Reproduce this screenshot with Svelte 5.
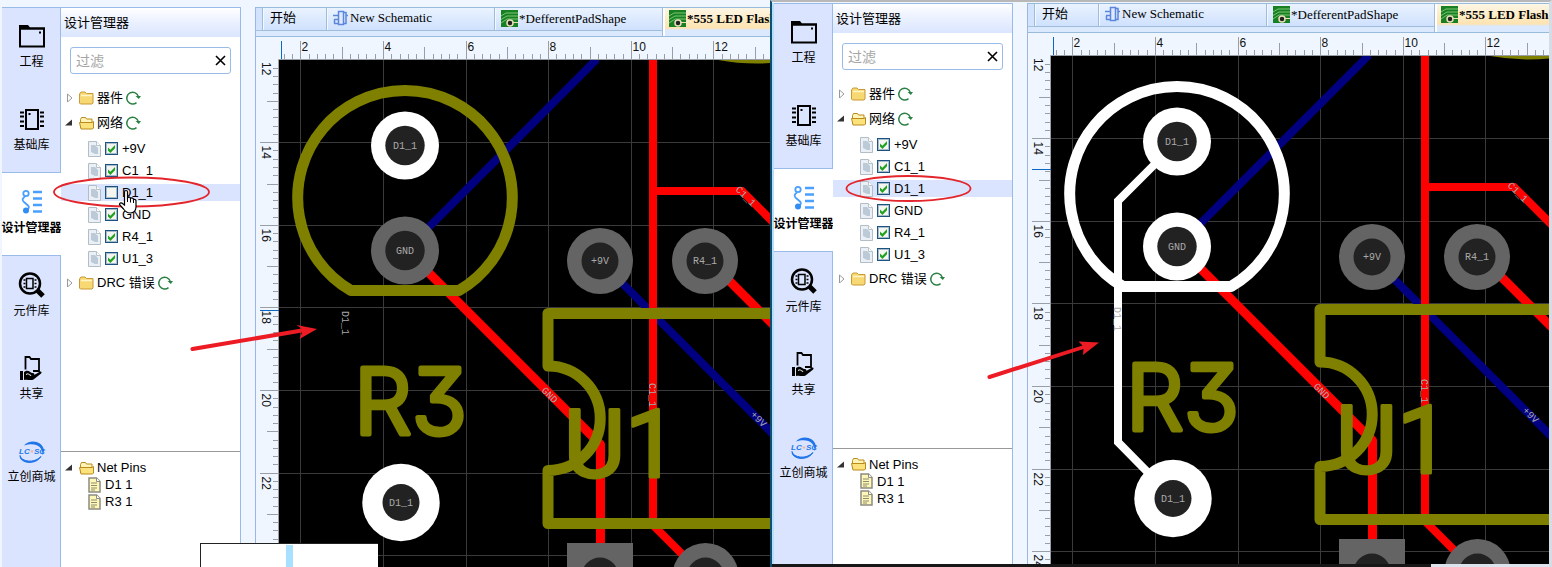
<script>
  const navItems = [
    { id: 'project', label: '工程' },
    { id: 'base', label: '基础库' },
    { id: 'manager', label: '设计管理器', active: true },
    { id: 'parts', label: '元件库' },
    { id: 'share', label: '共享' },
    { id: 'mall', label: '立创商城' }
  ];
  const tabs = [
    { kind: 'start', label: '开始' },
    { kind: 'schematic', label: 'New Schematic' },
    { kind: 'pcb', label: '*DefferentPadShape' },
    { kind: 'pcb', label: '*555 LED Flash', active: true }
  ];
  const windows = [
    { key: 'hidden', lit: false, cursorY: 310 },
    { key: 'shown', lit: true, cursorY: 173 }
  ];
  let nets = $state({
    hidden: [['+9V', true], ['C1_1', true], ['D1_1', false], ['GND', true], ['R4_1', true], ['U1_3', true]].map(([name, on]) => ({ name, on })),
    shown: ['+9V', 'C1_1', 'D1_1', 'GND', 'R4_1', 'U1_3'].map((name) => ({ name, on: true }))
  });
  let sizes = $state({ hidden: { w: 515, h: 560 }, shown: { w: 521, h: 560 } });

  // Board coordinates: the ruler corner is at (256, 37), one major step is 2 mm.
  const step = 82.6;
  const ticks = (first, from, to, start) => {
    const out = [];
    for (let i = -10; i < 400; i++) {
      const pos = first + (i * step) / 10;
      if (pos < from || pos > to) continue;
      out.push({ pos: Math.round(pos) + 0.5, size: i % 10 === 0 ? 2 : i % 5 === 0 ? 1 : 0, value: start + (i / 10) * 2 });
    }
    return out;
  };
</script>

{#snippet navIcon(id)}
  <svg class="nav-icon" width="32" height="32" viewBox="0 0 32 32" aria-hidden="true">
    {#if id === 'project'}
      <path d="M3 4h9l2 2.500h15v2H3z" fill="#000" />
      <path d="M4 7.500h24v18H4z" fill="none" stroke="#000" stroke-width="2" />
      <path d="M23 10.500h2v2h-2z" fill="#000" />
    {:else if id === 'base'}
      <path d="M10 6h12v19H10z" fill="none" stroke="#000" stroke-width="2" />
      <path d="M4 8.500h4m-4 4h4m-4 5h4m-4 4.500h4M24 8.500h4m-4 4h4m-4 5h4m-4 4.500h4" stroke="#000" stroke-width="2" />
      <path d="M12.500 9h2v2h-2z" fill="#000" />
    {:else if id === 'manager'}
      <g fill="none" stroke="#4aa0ff" stroke-width="1.800">
        <circle cx="10" cy="6.500" r="2.700" />
        <path d="M9 9.500c-3 2-3 3.500-1 5.500l4 3.500c1.500 1.500 1 3-1 4" />
        <path d="M17 5h9M17 11.500h9M17 18h9M17 24.500h9" stroke-width="2.500" />
      </g>
      <circle cx="10" cy="23.500" r="3" fill="#2f8df5" />
    {:else if id === 'parts'}
      <circle cx="14" cy="13.500" r="10" fill="none" stroke="#000" stroke-width="2.500" />
      <path d="M21 20l6 6" stroke="#000" stroke-width="5" />
      <path d="M10.500 8.500h6.500v10h-6.500z" fill="none" stroke="#000" stroke-width="1.500" />
      <path d="M7.500 10h2m-2 3.500h2m-2 3.500h2M18.500 10h2m-2 3.500h2m-2 3.500h2" stroke="#000" stroke-width="1.300" />
    {:else if id === 'share'}
      <path d="M9.500 16.500V4h4l1.500 2h8v12h-6" fill="none" stroke="#000" stroke-width="1.800" />
      <path d="M4 18h3v9H4zM8 19c4-3 6 0 8 1 3 0 3 2 1 2.500h-4c4 1 6-1 11-4 2-.5 2 1.500.5 2.500l-7 5.500c-3 1.500-6-.5-9.500.500z" fill="#000" />
      <path d="M10 21.500c2-1.500 3 0 5 1" fill="none" stroke="#fff" stroke-width="1" />
    {:else}
      <path d="M8 9.500C13 3 26 4 28 14c0 2-.5 4-1.500 5C27 11 20 5.500 8 9.500z" fill="#1f74ea" />
      <path d="M4 19.500c1 6 14 8.500 21 1-4 7-16 8-20.500 2z" fill="#1f74ea" stroke="#1f74ea" />
      <text x="3" y="18" class="logo">LC</text>
      <text x="18" y="18" class="logo">SC</text>
      <circle cx="16" cy="15.500" r="1.300" fill="#f4b59a" />
    {/if}
  </svg>
{/snippet}

{#snippet folder(open)}
  <svg class="folder" width="15" height="14" viewBox="0 0 15 14" aria-hidden="true">
    {#if open}
      <path d="M1.500 12V3.500l1-2h4l1 1.500h5.500v3" fill="#fff3b5" stroke="#b98a1e" />
      <path d="M.5 6.500h12.500l1.500-1v6.500l-1 1H2z" fill="#fbe27c" stroke="#b98a1e" />
    {:else}
      <path d="M.5 12V3l1.500-2h4l1.500 1.500h6.500V12l-1 1H1.500z" fill="#f8d873" stroke="#c99a37" />
      <path d="M2 4.500h11" stroke="#fff4c4" stroke-width="1.500" />
    {/if}
  </svg>
{/snippet}

{#snippet arrow(open)}
  <svg class="arrow" width="8" height="9" viewBox="0 0 8 9" aria-hidden="true">
    {#if open}
      <path d="M7 1.500v6H0z" fill="#333" />
    {:else}
      <path d="M2.500 1l4.500 4-4.500 4z" fill="#fff" stroke="#999" />
    {/if}
  </svg>
{/snippet}

{#snippet refresh()}
  <button class="refresh" aria-label="刷新">
    <svg width="15" height="14" viewBox="0 0 15 14" aria-hidden="true">
      <path d="M10.500 11.700A5.900 5.900 0 1 1 12.200 5" fill="none" stroke="#2b8044" stroke-width="1.500" />
      <path d="M9.500 5h5.500L12.800 8z" fill="#2b8044" />
    </svg>
  </button>
{/snippet}

{#snippet page(color)}
  <svg class="page" width="13" height="16" viewBox="0 0 13 16" aria-hidden="true">
    {#if color === 'note'}
      <path d="M1 1h7.500L12 4.500V15H1z" fill="#fdf7b8" stroke="#8d8a80" stroke-width="1.500" />
      <path d="M8.500 1v3.500H12" fill="#fff" stroke="#8d8a80" />
      <path d="M3 6h6M3 8.500h6M3 11h6M3 13h4" stroke="#8f8b6c" />
    {:else}
      <path d="M.5.500h8l4 4v11H.5z" fill="#eaf0f5" stroke="#b3bdc6" />
      <path d="M8.500.500v4h4" fill="#fff" stroke="#b9c3cb" />
      <path d="M3 4h4l3 3v6H7l-4-2z" fill="#bccad7" />
    {/if}
  </svg>
{/snippet}

{#snippet pad(x, y, outer, inner, fill, label)}
  <circle cx={x} cy={y} r={outer} {fill} />
  <circle cx={x} cy={y} r={inner} fill="#222" />
  {#if label}<text class="net" {x} y={y + 3} text-anchor="middle">{label}</text>{/if}
{/snippet}

{#snippet board(lit, cursorY, size)}
  {@const xTicks = ticks(300.4, 282, 256 + size.w, 2)}
  {@const yTicks = ticks(59.6, 62, 8 + size.h, 12)}
  {@const xMajor = xTicks.filter((t) => t.size === 2)}
  {@const yMajor = yTicks.filter((t) => t.size === 2)}
  <svg class="board" role="img" aria-label="PCB">
    <g transform="translate(-256 -37)">
      <rect x="279" y="60" width="3000" height="2000" fill="#000" />
      <g stroke="#3a3a3a">
        {#each xMajor as t}<path d="M{t.pos} 60v2000" />{/each}
        {#each yMajor as t}<path d="M279 {t.pos}h3000" />{/each}
      </g>

      <g fill="none" stroke-width="8">
        <path d="M405 251L597 59M600 261l900 900" stroke="#000080" />
        <g stroke="#f00">
          <path d="M653 60v465l60 60M653 191h89l800 800" />
          <path d="M405 249L600.500 444.500V560" stroke-width="9" stroke-linejoin="round" />
          <path d="M710 261.500l800 800" stroke-width="9" />
        </g>
        {#if lit}<path d="M405 146L346 205V446l56 57" stroke="#fff" />{/if}
      </g>

      {@render pad(405, 145.500, 34, 19.700, '#fff', '')}
      {@render pad(405, 250.500, 34, 19.700, lit ? '#fff' : '#646464', '')}
      {@render pad(600, 261, 33, 18.500, '#646464', '+9V')}
      {@render pad(705, 261, 33, 18.500, '#646464', 'R4_1')}
      {@render pad(401, 502.500, 38.700, 18.500, '#fff', 'D1_1')}
      <path d="M567 543h66v66h-66z" fill="#646464" />
      <circle cx="600" cy="576" r="18.500" fill="#222" />
      {@render pad(705.500, 576, 33, 18.500, '#646464', '')}

      <path d="M351 290.500h108A107.300 107.300 0 1 0 351 290.500z" fill="none" stroke={lit ? '#fff' : '#808000'} stroke-width="11" stroke-linejoin="round" />
      <g fill="none" stroke="#808000" stroke-width="11" stroke-linejoin="round">
        <path d="M3000 313.500H548V366A52 52 0 0 1 548 470.500V523.500H3000" />
        <svg x="279" y="60" width="1500" height="10"><circle cx="478" cy="-212.500" r="210.500" /></svg>
      </g>
      <text class="silk" x="354" y="434">R3</text>
      <text class="silk narrow" x="564" y="477">U1</text>

      <text class="net" x="405" y="149" text-anchor="middle">D1_1</text>
      <text class="net" x="405" y="254" text-anchor="middle">GND</text>
      <text class="net" transform="translate(342 311) rotate(90)">D1_1</text>
      <text class="net" transform="translate(649 383) rotate(90)">C1_1</text>
      <text class="net" transform="translate(541 391) rotate(45)">GND</text>
      <text class="net" transform="translate(735 190) rotate(45)">C1_1</text>
      <text class="net" transform="translate(750 415) rotate(45)">+9V</text>

      <path d="M256 37h3000v23H256z" fill="#eff6ff" />
      <path d="M256 37h23v2000h-23z" fill="#eff6ff" />
      <g stroke="#999fa5">
        {#each xTicks as t}<path d="M{t.pos} 59v{[-5, -12, -18][t.size]}" />{/each}
        {#each yTicks as t}<path d="M279 {t.pos}h{[-6, -12, -19][t.size]}" />{/each}
        <path d="M278.500 2000V59.500H3000" fill="none" />
      </g>
      {#each xMajor as t}<text class="tick" x={t.pos + 1} y="51">{t.value}</text>{/each}
      <text class="tick" transform="translate(262 62) rotate(90)">12</text>
      {#each yMajor as t}<text class="tick" transform="translate(262 {t.pos + 3}) rotate(90)">{t.value}</text>{/each}
      <path d="M281.500 41v18M260 {cursorY + 0.5}h19" stroke="#0a68c4" />
    </g>
  </svg>
{/snippet}

<main class="compare">
  {#each windows as w}
    <section class="window {w.key}">
      <nav class="nav">
        {#each navItems as item}
          <button class="nav-item" class:active={item.active}>
            {@render navIcon(item.id)}
            <span class="nav-label">{item.label}</span>
          </button>
        {/each}
      </nav>

      <aside class="panel">
        <h2 class="panel-title">设计管理器</h2>
        <div class="tree-area">
          <div class="filter">
            <input type="text" placeholder="过滤" aria-label="过滤" />
            <button aria-label="清除">
              <svg width="11" height="11" viewBox="0 0 11 11" aria-hidden="true"><path d="M1 1l9 9M10 1l-9 9" stroke="#000" stroke-width="1.600" /></svg>
            </button>
          </div>
          <div class="group">{@render arrow(false)}{@render folder(false)}<span>器件</span>{@render refresh()}</div>
          <div class="group">{@render arrow(true)}{@render folder(true)}<span>网络</span>{@render refresh()}</div>
          <ul class="nets">
            {#each nets[w.key] as net}
              <li class:selected={net.name === 'D1_1'}>
                <label>{@render page('net')}<input type="checkbox" bind:checked={net.on} /><span>{net.name}</span></label>
              </li>
            {/each}
          </ul>
          <div class="group">{@render arrow(false)}{@render folder(false)}<span>DRC 错误</span>{@render refresh()}</div>
        </div>
        <div class="pins">
          <div class="pin-row root">{@render arrow(true)}{@render folder(true)}<span>Net Pins</span></div>
          <div class="pin-row">{@render page('note')}<span>D1 1</span></div>
          <div class="pin-row">{@render page('note')}<span>R3 1</span></div>
        </div>
      </aside>

      <div class="editor" bind:clientWidth={sizes[w.key].w} bind:clientHeight={sizes[w.key].h}>
        <div class="tabs">
          {#each tabs as tab}
            <button class="tab {tab.kind}" class:current={tab.active}>
              {#if tab.kind === 'schematic'}
                <svg width="16" height="16" viewBox="0 0 16 16" aria-hidden="true">
                  <path d="M5.500 1.500h5v13h-5zM10.500 2.500h2.500v11h-2.500M0 5.500h5M1 9.500h4M1 13.500h4M1.500 9.500v4M13 5.500h2" fill="#dfe9ff" stroke="#5b86dc" stroke-width="1.500" />
                </svg>
              {:else if tab.kind === 'pcb'}
                <svg width="17" height="17" viewBox="0 0 17 17" aria-hidden="true">
                  <path d="M0 0h17v17H0z" fill="#168022" />
                  <path d="M0 6l5-3h12M0 9.500L6 6h11M0 13l6-4h11" fill="none" stroke="#7ec474" />
                  <circle cx="9" cy="13" r="3" fill="#222" stroke="#e8dfb8" stroke-width="1.500" />
                  <path d="M12 12.500h5" stroke="#e8dfb8" />
                </svg>
              {/if}
              <span>{tab.label}</span>
            </button>
          {/each}
        </div>
        {@render board(w.lit, w.cursorY, sizes[w.key])}
      </div>

      <svg class="marks" aria-hidden="true">
        {#if w.lit}
          <g transform="translate(0 -6)">
            <ellipse cx="136.500" cy="192.500" rx="62" ry="12.500" fill="none" stroke="#e3262c" stroke-width="1.800" />
            <path d="M218 383a2 2 0 0 1-1-4L310.500 349.500l-4-4 20.500 1-16 12.500.5-6z" fill="#ed1c24" />
          </g>
        {:else}
          <ellipse cx="131.500" cy="192" rx="77.500" ry="14.500" fill="none" stroke="#e3262c" stroke-width="1.800" />
          <path d="M193 351a2 2 0 0 1-1-4L301.500 328.500l-5-3.500 20.500 4-17.500 10 2.500-6.500z" fill="#ed1c24" />
          <path d="M124.500 205v-13c0-2 3-2 3 0v6c1-1.500 3-1 3 .5 1-1 3-.5 3 1 1-.5 2.500 0 2.500 1.500v6c0 4-3 6-6 6s-5-2-6.500-4l-4-4.500c0-2 2-2 3-1z" fill="#fff" stroke="#000" stroke-width="1.200" />
          <path d="M127.500 198v4M130.500 199v3.500M133.500 200v3" stroke="#000" />
        {/if}
      </svg>
      {#if !w.lit}<div class="preview"><i></i></div>{/if}
    </section>
  {/each}
</main>

<style>
  :global(body) {
    margin: 0;
    background: #eff6ff;
  }
  .compare {
    display: grid;
    grid-template-columns: minmax(0, 770fr) minmax(0, 782fr);
    height: 100vh;
    min-height: 540px;
    font: 13px/17px 'Liberation Sans', 'Noto Sans CJK SC', sans-serif;
    color: #000;
  }
  .window {
    position: relative;
    display: flex;
    min-width: 0;
    min-height: 0;
    box-sizing: border-box;
    overflow: hidden;
    padding: 7px 0 0 2px;
    background: #eff6ff;
  }
  .shown {
    padding-top: 1px;
    padding-bottom: 3px;
    border-style: solid;
    border-width: 2px 3px 0 2px;
    border-color: #b8b8b8 #d5dce6 #171717 #0f4f74;
    background:
      linear-gradient(to right, #171717 calc(100% - 118px), #dce3ec 0) bottom / 100% 3px no-repeat,
      #eff6ff;
  }
  .shown .nav {
    box-shadow: -2px 0 #b4dffb;
  }
  button {
    margin: 0;
    padding: 0;
    border: 0;
    background: none;
    font: inherit;
    color: inherit;
  }
  .nav {
    flex: none;
    width: 59px;
    box-sizing: border-box;
    background:
      linear-gradient(#99bbe8, #99bbe8) right / 1px 100% no-repeat,
      linear-gradient(#99bbe8, #99bbe8) top / 100% 1px no-repeat,
      #dbe4ff;
  }
  .nav-item {
    display: flex;
    flex-direction: column;
    align-items: center;
    gap: 1px;
    width: 100%;
    height: 83px;
    padding-top: 14px;
    box-sizing: border-box;
    font-size: 12px;
    line-height: 16px;
    white-space: nowrap;
  }
  .nav-item.active {
    background: #fff;
    box-shadow: 0 -1px #99bbe8, inset 0 -1px #99bbe8;
    font-weight: bold;
  }
  .nav-icon {
    flex: none;
  }
  .logo {
    font: italic bold 8px 'Liberation Sans', sans-serif;
    fill: #2478ea;
  }
  .panel {
    display: flex;
    flex-direction: column;
    flex: none;
    width: 180px;
    box-sizing: border-box;
    border-top: 1px solid #99bbe8;
    border-right: 1px solid #99bbe8;
    background: #fff;
  }
  .panel-title {
    margin: 0;
    padding-left: 3px;
    font-size: 13px;
    font-weight: normal;
    line-height: 29px;
    background: linear-gradient(#fff, #eef3ff 40%, #dae5ff);
  }
  .tree-area {
    flex: 404 1 0;
    min-height: 0;
    box-sizing: border-box;
    padding-top: 10px;
    border-bottom: 1px solid #999;
  }
  .filter {
    display: flex;
    align-items: center;
    height: 25px;
    margin: 0 9px 11px;
    padding: 0 4px 0 5px;
    border: 1px solid #99bbe8;
    border-radius: 3px;
  }
  .filter input {
    flex: 1;
    min-width: 0;
    padding: 0;
    border: 0;
    outline: 0;
    background: none;
    font: 14px/20px 'Liberation Sans', 'Noto Sans CJK SC', sans-serif;
  }
  .filter input::placeholder {
    color: #a5a5a5;
  }
  .filter button {
    display: flex;
  }
  .group {
    display: flex;
    align-items: center;
    height: 25px;
    padding-left: 4px;
  }
  .arrow {
    margin-right: 6px;
  }
  .folder {
    margin-right: 3px;
  }
  .refresh {
    display: flex;
    margin-left: 3px;
  }
  .nets {
    display: flex;
    flex-direction: column;
    gap: 5px;
    margin: 0;
    padding: 5px 0 3px;
    list-style: none;
  }
  .nets li {
    padding-left: 27px;
  }
  .nets li.selected {
    background: #dbe4ff;
  }
  .nets label {
    display: flex;
    align-items: center;
    gap: 4px;
    height: 17px;
  }
  .nets input {
    appearance: none;
    width: 13px;
    height: 13px;
    margin: 0;
    box-sizing: border-box;
    border: 1px solid #1c5180;
    box-shadow: inset 0 0 0 1px #a9bccb;
    background: #f5f5f0;
  }
  .nets input:checked::before {
    content: '';
    display: block;
    width: 11px;
    height: 11px;
    background: #21a121;
    clip-path: polygon(18% 42%, 40% 62%, 82% 18%, 82% 48%, 40% 90%, 18% 68%);
  }
  .pins {
    flex: 108 1 0;
    min-height: 0;
    box-sizing: border-box;
    padding-top: 7px;
  }
  .pin-row {
    display: flex;
    align-items: center;
    gap: 4px;
    height: 17px;
    padding-left: 27px;
  }
  .pin-row.root {
    gap: 0;
    padding-left: 4px;
  }
  .editor {
    display: flex;
    flex: 1;
    flex-direction: column;
    min-width: 0;
    margin-left: 14px;
    border-left: 1px solid #9db5e0;
  }
  .tabs {
    display: flex;
    flex: none;
    height: 28px;
    padding: 0 0 0 6px;
    overflow: hidden;
    border-top: 1px solid #99bbda;
    border-bottom: 1px solid #99bbda;
    background: linear-gradient(#d2e3fd 22px, #a5c3de 22px, #a5c3de 23px, #dbe9ff 23px);
  }
  .tab {
    display: flex;
    flex: none;
    align-items: center;
    width: 168px;
    height: 23px;
    box-sizing: border-box;
    padding: 0 0 3px 6px;
    border-left: 1px solid #9fbcd9;
    border-bottom: 1px solid #9fbcd9;
    box-shadow: inset 1px 0 #f4f9ff;
    background: linear-gradient(#eaf3ff, #cfe1fd);
    font: 13px/17px 'Liberation Serif', 'Noto Sans CJK SC', serif;
    white-space: nowrap;
  }
  .tab.start {
    width: 64px;
    padding-left: 7px;
  }
  .tab svg {
    flex: none;
    margin-right: 1px;
  }
  .tab.pcb {
    padding-bottom: 1px;
  }
  .tab.current {
    height: 28px;
    padding-bottom: 8px;
    border-bottom: 0;
    background: linear-gradient(#fdf6e6, #fde3b0 20px, #dbe9ff 22px);
    box-shadow: inset 2px 0 #fff;
    font-weight: bold;
  }
  .board {
    display: block;
    flex: 1 1 0;
    width: 100%;
    min-height: 0;
    overflow: hidden;
  }
  .tick {
    font: 12px 'Liberation Sans', sans-serif;
    fill: #111;
  }
  .net {
    font: 10px 'Liberation Mono', monospace;
    fill: #aaa;
  }
  .silk {
    font: 300 91px Inter, sans-serif;
    font-feature-settings: 'cv09';
    fill: #808000;
    stroke: #808000;
    stroke-width: 5px;
    stroke-linejoin: round;
  }
  .silk.narrow {
    font: 400 94px Roboto, sans-serif;
    stroke-width: 3px;
  }
  .marks {
    position: absolute;
    inset: 0;
    width: 100%;
    height: 100%;
    pointer-events: none;
  }
  .preview {
    position: absolute;
    left: 200px;
    bottom: 0;
    display: flex;
    width: 177px;
    height: 23px;
    border-top: 1px solid #222;
    border-left: 1px solid #222;
    background: #fff;
  }
  .preview i {
    width: 7px;
    margin: 1px 0 0 85px;
    background: #a8e1ff;
  }
</style>
